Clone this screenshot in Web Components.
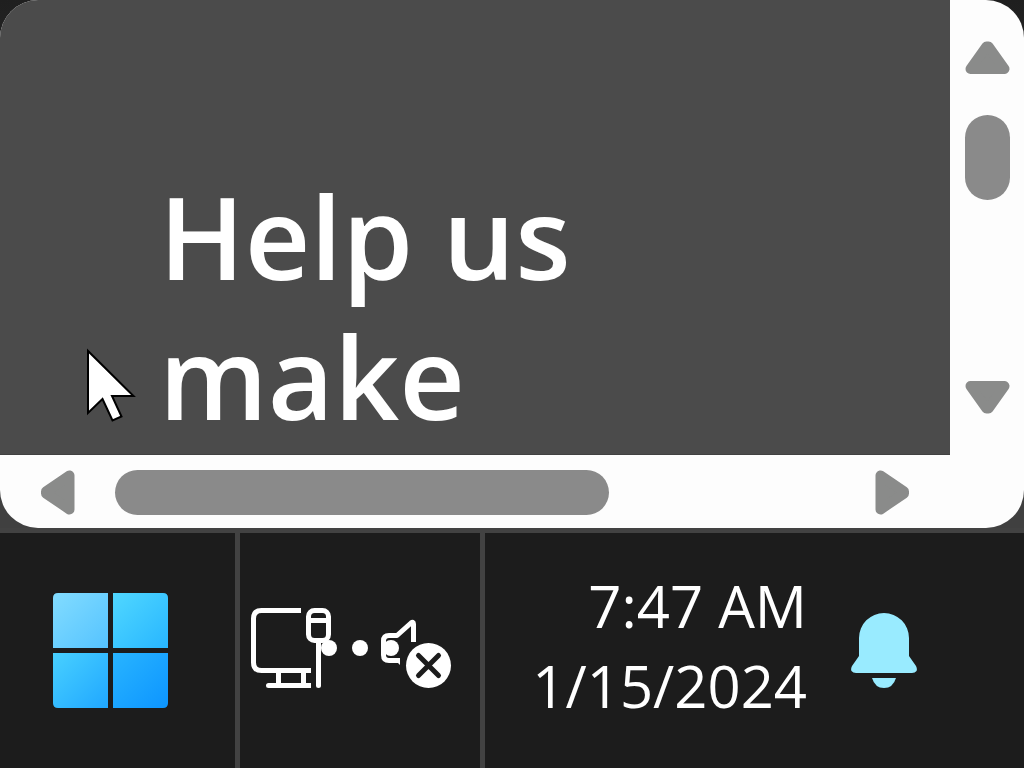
<!DOCTYPE html>
<html lang="en">
<head>
<meta charset="utf-8">
<title>Desktop</title>
<style>
  html, body { margin: 0; height: 100%; }
  body { background: #1c1c1c; color: #fff; font-family: "Open Sans", "Noto Sans", sans-serif; overflow: hidden; }
</style>
</head>
<body>
<desk-top>
  <app-window>
    <h1>Help us<br>make</h1>
  </app-window>
  <task-bar slot="bar">
    <start-button></start-button>
    <system-tray></system-tray>
    <clock-panel time="7:47 AM" date="1/15/2024"></clock-panel>
  </task-bar>
</desk-top>

<script>
const define = (name, html, setup) => customElements.define(name, class extends HTMLElement {
  constructor() {
    super();
    this.attachShadow({ mode: "open" }).innerHTML = html;
  }
  connectedCallback() { if (setup) setup(this, this.shadowRoot); }
});

define("desk-top", `
<style>
  :host { display: flex; flex-direction: column; min-height: 100vh; background: linear-gradient(#1f1f1f, #404040 60%); }
  main { flex: 1; display: flex; flex-direction: column; }
  ::slotted(app-window) { flex: 1; }
</style>
<main><slot></slot></main>
<slot name="bar"></slot>`);

define("app-window", `
<style>
  :host { position: relative; display: grid; grid-template-columns: 1fr 74px; grid-template-rows: 1fr 73px;
          background: #fdfdfd; border-radius: 38px; overflow: hidden; }
  section { background: #4b4b4b; border-bottom: 1px solid #414141; padding: 166px 0 0 159px; overflow: hidden; }
  ::slotted(h1) { margin: 0; font-size: 114px; line-height: 140px; font-weight: 600; white-space: nowrap; }
  .pointer { position: absolute; left: 86px; top: 346px; }
</style>
<section><slot></slot></section>
<scroll-bar direction="vertical" aria-label="Vertical scroll"></scroll-bar>
<scroll-bar direction="horizontal" aria-label="Horizontal scroll"></scroll-bar>
<svg class="pointer" width="52" height="78" viewBox="0 0 52 78" aria-hidden="true">
  <path d="M2 5 V67 L16.500 53 L26.500 74.500 L35.500 70.500 L26 50 H47.500 Z" fill="#fff" stroke="#000" stroke-width="2"/>
</svg>`);

define("scroll-bar", `
<style>
  :host { display: flex; flex-direction: column; align-items: stretch; gap: 40px; padding: 40px 14px 40px 15px; }
  :host([direction="horizontal"]) { flex-direction: row; padding: 15px 40px 13px 40px; }
  button { flex: none; display: flex; padding: 0; border: 0; background: none; color: #8a8b8a; align-items: center; justify-content: center; }
  svg { display: block; fill: currentColor; stroke: currentColor; stroke-width: 10; stroke-linejoin: round; }
  .track { flex: 1; display: grid; grid-template-rows: 17fr 28fr; }
  .thumb { border-radius: 23px; background: #8a8a8a; }
  :host([direction="horizontal"]) .track { grid-template: 1fr / 247fr 113fr; }
</style>
<button type="button" class="back"></button>
<div class="track"><div class="thumb"></div></div>
<button type="button" class="forward"></button>`, (host, root) => {
  const vertical = host.getAttribute("direction") === "vertical";
  const icon = (w, h, d) => `<svg width="${w}" height="${h}" viewBox="0 0 ${w} ${h}" aria-hidden="true"><path d="${d}"/></svg>`;
  const back = root.querySelector(".back"), forward = root.querySelector(".forward");
  host.setAttribute("role", "group");
  back.setAttribute("aria-label", vertical ? "Scroll up" : "Scroll left");
  forward.setAttribute("aria-label", vertical ? "Scroll down" : "Scroll right");
  back.innerHTML = vertical ? icon(45, 35, "M5.500 29 L21.500 6.500 H23.500 L39.500 29 Z") : icon(35, 45, "M29.500 5.500 V39.500 L6 23.500 V21.500 Z");
  forward.innerHTML = vertical ? icon(45, 35, "M5.500 6 L21.500 28.500 H23.500 L39.500 6 Z") : icon(35, 45, "M5.500 5.500 V39.500 L29 23.500 V21.500 Z");
});

define("task-bar", `
<style>
  :host { flex: none; box-sizing: border-box; height: 240px; border-top: 5px solid #424242; background: #1c1c1c;
          display: grid; grid-template-columns: 235px 250px 1fr; }
</style>
<slot></slot>`);

define("start-button", `
<style>
  :host { display: flex; }
  button { flex: 1; display: flex; align-items: center; padding: 0 0 0 53px; border: 0; background: none; }
</style>
<button type="button" aria-label="Start">
  <svg width="115" height="115" viewBox="0 0 115 115" aria-hidden="true">
    <defs>
      <linearGradient id="a" x1="0" y1="0" x2="1" y2="1"><stop offset="0" stop-color="#82dcff"/><stop offset="1" stop-color="#55c3ff"/></linearGradient>
      <linearGradient id="b" x1="0" y1="0" x2="1" y2="1"><stop offset="0" stop-color="#50d7ff"/><stop offset="1" stop-color="#28b6ff"/></linearGradient>
      <linearGradient id="c" x1="0" y1="0" x2="1" y2="1"><stop offset="0" stop-color="#48d0ff"/><stop offset="1" stop-color="#20a7ff"/></linearGradient>
      <linearGradient id="d" x1="0" y1="0" x2="1" y2="1"><stop offset="0" stop-color="#28b4ff"/><stop offset="1" stop-color="#0d95ff"/></linearGradient>
    </defs>
    <path fill="url(#a)" d="M5 0H55V55H0V5Q0 0 5 0Z"/>
    <path fill="url(#b)" d="M60 0H110Q115 0 115 5V55H60Z"/>
    <path fill="url(#c)" d="M0 60H55V115H5Q0 115 0 110Z"/>
    <path fill="url(#d)" d="M60 60H115V110Q115 115 110 115H60Z"/>
  </svg>
</button>`);

define("system-tray", `
<style>
  :host { display: flex; border: 0 solid #424242; border-width: 0 5px; }
  button { flex: 1; display: flex; align-items: center; justify-content: center; padding: 0; border: 0; background: none; }
  svg { fill: none; stroke: #fff; stroke-width: 5; }
</style>
<button type="button" aria-label="Network and volume">
  <svg width="240" height="115" viewBox="0 0 240 115" aria-hidden="true">
    <path d="M61 17.500H21.500Q13.500 17.500 13.500 25.500V69.500Q13.500 77.500 21.500 77.500H71M38.500 78V92M63.500 78V92"/>
    <path d="M71 92.500H28.500" /><circle cx="28.500" cy="92.500" r="2.500" fill="#fff" stroke="none"/>
    <rect x="68.500" y="17.500" width="20" height="30" rx="6"/>
    <path d="M68 27.500H89"/><path d="M78.500 48V92.500" stroke-linecap="round"/>
    <g fill="#fff" stroke="none"><circle cx="89" cy="55" r="8"/><circle cx="120" cy="55" r="8"/><circle cx="151" cy="55" r="8"/></g>
    <path d="M160 67.500H149Q143.500 67.500 143.500 62V48Q143.500 42.500 149 42.500H157L171 30Q173.500 28 173.500 31V49" stroke-linejoin="round"/>
    <path d="M156 68H160V72Z" fill="#fff" stroke="none"/>
    <circle cx="188.500" cy="72.500" r="22.500" fill="#fff" stroke="none"/>
    <path d="M178.500 62.500L198.500 82.500M198.500 62.500L178.500 82.500" stroke="#1c1c1c" stroke-linecap="round"/>
  </svg>
</button>`);

define("clock-panel", `
<style>
  :host { display: flex; justify-content: flex-end; align-items: center; padding-right: 107px; }
  button { display: flex; align-items: center; gap: 44px; padding: 0; border: 0; background: none; color: inherit; font: inherit; }
  .text { font-size: 58px; line-height: 80px; text-align: right; white-space: nowrap; padding-bottom: 10px; }
  time { display: block; }
  svg { flex: none; fill: #99ebff; }
</style>
<button type="button">
  <span class="text"><time class="time"></time><time class="date"></time></span>
  <svg width="66" height="75" viewBox="0 0 66 75" role="img" aria-label="Notifications">
    <path d="M33 0A25 25 0 0 1 58 25V43L65 53Q66.500 56 65.500 58Q64 60 61 60H5Q2 60 0.500 58Q-0.500 56 1 53L8 43V25A25 25 0 0 1 33 0Z"/>
    <path d="M21 65H45Q42 75 33 75Q24 75 21 65Z"/>
  </svg>
</button>`, (host, root) => {
  root.querySelector(".time").textContent = host.getAttribute("time");
  root.querySelector(".date").textContent = host.getAttribute("date");
});
</script>
</body>
</html>
